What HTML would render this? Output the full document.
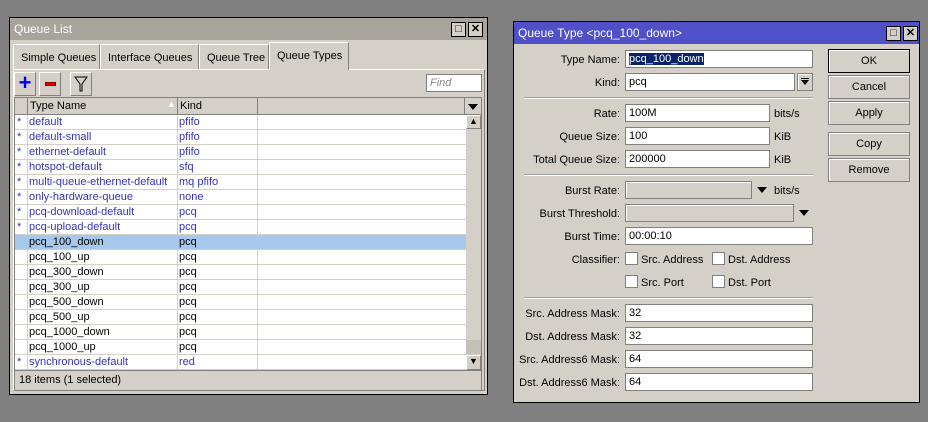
<!DOCTYPE html>
<html><head><style>
*{box-sizing:border-box;margin:0;padding:0}
body{width:928px;height:422px;background:#808080;font-family:"Liberation Sans",sans-serif;font-size:11px;color:#000;position:relative;overflow:hidden}
.a{position:absolute}
.win{background:#d4d0c8;border:1px solid #000}
.tb{height:22px;font-size:12px;color:#fff;padding:4px 0 0 4px}
.wb{width:15px;height:15px;border:1px solid #000;background:#d4d0c8;top:4px;font-size:11px;line-height:12px;text-align:center;color:#000;font-weight:bold}
.inp{background:#fff;border:1px solid #808080;box-shadow:inset 1px 1px 0 #fff;height:18px;padding:2px 0 0 3px;font-size:11px}
.dis{background:#d4d0c8}
.lbl{width:106px;text-align:right;left:0}
.btn{width:82px;height:24px;border:1px solid #808080;box-shadow:inset 1px 1px 0 #fff;text-align:center;line-height:22px;font-size:11px;left:314px}
.sep{height:2px;border-top:1px solid #a0a0a0;border-bottom:1px solid #fff;left:10px;width:289px}
.cb{width:13px;height:13px;background:#fff;border:1px solid #808080}
.row{height:15px;left:0;width:451px;border-bottom:1px solid #d4d0c8;background:#fff;line-height:14px}
.row span{position:absolute;top:0}
.blue{color:#3333bb}
.tab{height:26px;border:1px solid #fff;border-right-color:#808080;border-bottom:none;padding:7px 0 0 7px;font-size:11px}
.arr{width:0;height:0;border-left:5px solid transparent;border-right:5px solid transparent;border-top:6px solid #000}
</style></head><body>
<!-- Left window -->
<div class="a win" style="left:9px;top:17px;width:479px;height:378px">
<div class="tb a" style="left:0;top:0;width:477px;background:#a8a49c">Queue List</div>
<div class="a wb" style="left:441px">□</div><div class="a wb" style="left:458px">✕</div>
<div class="a tab" style="left:3px;top:26px;width:87px">Simple Queues</div>
<div class="a tab" style="left:90px;top:26px;width:99px">Interface Queues</div>
<div class="a tab" style="left:189px;top:26px;width:70px">Queue Tree</div>
<div class="a tab" style="left:259px;top:24px;width:80px;height:28px;background:#d4d0c8;padding-top:7px;z-index:2">Queue Types</div>
<div class="a" style="left:3px;top:51px;width:472px;height:322px;border:1px solid #fff;border-right-color:#808080;border-bottom-color:#808080"></div>
<div class="a" style="left:4px;top:54px;width:22px;height:24px;border:1px solid #fff;border-right-color:#808080;border-bottom-color:#808080;color:#0000ee;font-size:22px;font-weight:bold;line-height:20px;text-align:center">+</div>
<div class="a" style="left:29px;top:54px;width:22px;height:24px;border:1px solid #fff;border-right-color:#808080;border-bottom-color:#808080"><div class="a" style="left:5px;top:9px;width:11px;height:4px;background:#e00;border:1px solid #800"></div></div>
<svg class="a" style="left:60px;top:54px" width="22" height="24"><rect x=".5" y=".5" width="21" height="23" fill="none" stroke="#fff"/><path d="M21.5 .5V23.5H.5" fill="none" stroke="#808080"/><path d="M5 5H17L12 12V19H10V12Z" fill="#d4d0c8" stroke="#000"/></svg>
<div class="a inp" style="left:416px;top:56px;width:56px;color:#888;font-style:italic">Find</div>
<div class="a" style="left:4px;top:79px;width:468px;height:274px;background:#fff;border:1px solid #808080;overflow:hidden">
 <div class="a" style="left:0;top:0;width:466px;height:17px;background:#d4d0c8;border-bottom:1px solid #808080">
  <div class="a" style="left:12px;top:0;height:16px;border-left:1px solid #808080;padding:2px 2px">Type Name</div>
  <div class="a" style="left:152px;top:1px;color:#fff;font-size:9px">▲</div>
  <div class="a" style="left:162px;top:0;height:16px;border-left:1px solid #808080;padding:2px 2px">Kind</div>
  <div class="a" style="left:242px;top:0;height:16px;border-left:1px solid #808080;width:208px;border-right:1px solid #808080"></div>
  <div class="a arr" style="left:453px;top:6px"></div>
 </div>
 <div class="a" style="left:0;top:17px;width:451px;height:255px">
  <div class="a" style="left:12px;top:0;width:1px;height:255px;background:#d4d0c8;z-index:1"></div>
  <div class="a" style="left:162px;top:0;width:1px;height:255px;background:#d4d0c8;z-index:1"></div>
  <div class="a" style="left:242px;top:0;width:1px;height:255px;background:#d4d0c8;z-index:1"></div>
  <div class="a row blue" style="top:0"><span style="left:2px">*</span><span style="left:14px">default</span><span style="left:164px">pfifo</span></div>
  <div class="a row blue" style="top:15px"><span style="left:2px">*</span><span style="left:14px">default-small</span><span style="left:164px">pfifo</span></div>
  <div class="a row blue" style="top:30px"><span style="left:2px">*</span><span style="left:14px">ethernet-default</span><span style="left:164px">pfifo</span></div>
  <div class="a row blue" style="top:45px"><span style="left:2px">*</span><span style="left:14px">hotspot-default</span><span style="left:164px">sfq</span></div>
  <div class="a row blue" style="top:60px"><span style="left:2px">*</span><span style="left:14px">multi-queue-ethernet-default</span><span style="left:164px">mq pfifo</span></div>
  <div class="a row blue" style="top:75px"><span style="left:2px">*</span><span style="left:14px">only-hardware-queue</span><span style="left:164px">none</span></div>
  <div class="a row blue" style="top:90px"><span style="left:2px">*</span><span style="left:14px">pcq-download-default</span><span style="left:164px">pcq</span></div>
  <div class="a row blue" style="top:105px"><span style="left:2px">*</span><span style="left:14px">pcq-upload-default</span><span style="left:164px">pcq</span></div>
  <div class="a row" style="top:120px;background:#a6c8ec;z-index:2"><span style="left:14px">pcq_100_down</span><span style="left:164px">pcq</span></div>
  <div class="a row" style="top:135px"><span style="left:14px">pcq_100_up</span><span style="left:164px">pcq</span></div>
  <div class="a row" style="top:150px"><span style="left:14px">pcq_300_down</span><span style="left:164px">pcq</span></div>
  <div class="a row" style="top:165px"><span style="left:14px">pcq_300_up</span><span style="left:164px">pcq</span></div>
  <div class="a row" style="top:180px"><span style="left:14px">pcq_500_down</span><span style="left:164px">pcq</span></div>
  <div class="a row" style="top:195px"><span style="left:14px">pcq_500_up</span><span style="left:164px">pcq</span></div>
  <div class="a row" style="top:210px"><span style="left:14px">pcq_1000_down</span><span style="left:164px">pcq</span></div>
  <div class="a row" style="top:225px"><span style="left:14px">pcq_1000_up</span><span style="left:164px">pcq</span></div>
  <div class="a row blue" style="top:240px"><span style="left:2px">*</span><span style="left:14px">synchronous-default</span><span style="left:164px">red</span></div>
 </div>
 <div class="a" style="left:451px;top:17px;width:15px;height:255px;background:#d4d0c8">
  <div class="a" style="left:0;top:0;width:15px;height:14px;font-size:9px;text-align:center;border:1px solid #fff;border-right-color:#808080;border-bottom-color:#808080">▲</div>
  <div class="a" style="left:0;top:225px;width:15px;height:14px;background:#c4c0b8"></div>
  <div class="a" style="left:0;top:240px;width:15px;height:15px;font-size:9px;text-align:center;border:1px solid #fff;border-right-color:#808080;border-bottom-color:#808080">▼</div>
 </div>
</div>
<div class="a" style="left:4px;top:353px;width:468px;height:20px;padding:3px 4px;border:1px solid #808080;border-top:none">18 items (1 selected)</div>
</div>

<!-- Right window -->
<div class="a win" style="left:513px;top:21px;width:407px;height:382px">
<div class="tb a" style="left:0;top:0;width:405px;background:#5050c8">Queue Type &lt;pcq_100_down&gt;</div>
<div class="a wb" style="left:372px">□</div><div class="a wb" style="left:389px">✕</div>
<div class="a lbl" style="top:32px">Type Name:</div>
<div class="a inp" style="left:111px;top:28px;width:188px"><span style="background:#0a246a;color:#fff">pcq_100_down</span></div>
<div class="a lbl" style="top:55px">Kind:</div>
<div class="a inp" style="left:111px;top:51px;width:170px">pcq</div>
<div class="a" style="left:283px;top:51px;width:16px;height:18px;border:1px solid #808080;box-shadow:inset 1px 1px 0 #fff"><div class="a arr" style="left:3px;top:6px;border-left-width:4px;border-right-width:4px;border-top-width:5px"></div><div class="a" style="left:3px;top:4px;width:8px;height:1px;background:#000"></div></div>
<div class="a sep" style="top:75px"></div>
<div class="a lbl" style="top:86px">Rate:</div>
<div class="a inp" style="left:111px;top:82px;width:145px">100M</div><div class="a" style="left:260px;top:86px">bits/s</div>
<div class="a lbl" style="top:109px">Queue Size:</div>
<div class="a inp" style="left:111px;top:105px;width:145px">100</div><div class="a" style="left:260px;top:109px">KiB</div>
<div class="a lbl" style="top:132px">Total Queue Size:</div>
<div class="a inp" style="left:111px;top:128px;width:145px">200000</div><div class="a" style="left:260px;top:132px">KiB</div>
<div class="a sep" style="top:152px"></div>
<div class="a lbl" style="top:163px">Burst Rate:</div>
<div class="a inp dis" style="left:111px;top:159px;width:127px"></div><div class="a arr" style="left:243px;top:165px"></div><div class="a" style="left:260px;top:163px">bits/s</div>
<div class="a lbl" style="top:186px">Burst Threshold:</div>
<div class="a inp dis" style="left:111px;top:182px;width:169px"></div><div class="a arr" style="left:285px;top:188px"></div>
<div class="a lbl" style="top:209px">Burst Time:</div>
<div class="a inp" style="left:111px;top:205px;width:188px">00:00:10</div>
<div class="a lbl" style="top:232px">Classifier:</div>
<div class="a cb" style="left:111px;top:230px"></div><div class="a" style="left:127px;top:232px">Src. Address</div>
<div class="a cb" style="left:198px;top:230px"></div><div class="a" style="left:214px;top:232px">Dst. Address</div>
<div class="a cb" style="left:111px;top:253px"></div><div class="a" style="left:127px;top:255px">Src. Port</div>
<div class="a cb" style="left:198px;top:253px"></div><div class="a" style="left:214px;top:255px">Dst. Port</div>
<div class="a sep" style="top:275px"></div>
<div class="a lbl" style="top:286px">Src. Address Mask:</div>
<div class="a inp" style="left:111px;top:282px;width:188px">32</div>
<div class="a lbl" style="top:309px">Dst. Address Mask:</div>
<div class="a inp" style="left:111px;top:305px;width:188px">32</div>
<div class="a lbl" style="top:332px">Src. Address6 Mask:</div>
<div class="a inp" style="left:111px;top:328px;width:188px">64</div>
<div class="a lbl" style="top:355px">Dst. Address6 Mask:</div>
<div class="a inp" style="left:111px;top:351px;width:188px">64</div>
<div class="a btn" style="top:27px;border-color:#000">OK</div>
<div class="a btn" style="top:53px">Cancel</div>
<div class="a btn" style="top:79px">Apply</div>
<div class="a btn" style="top:110px">Copy</div>
<div class="a btn" style="top:136px">Remove</div>
</div>
</body></html>
